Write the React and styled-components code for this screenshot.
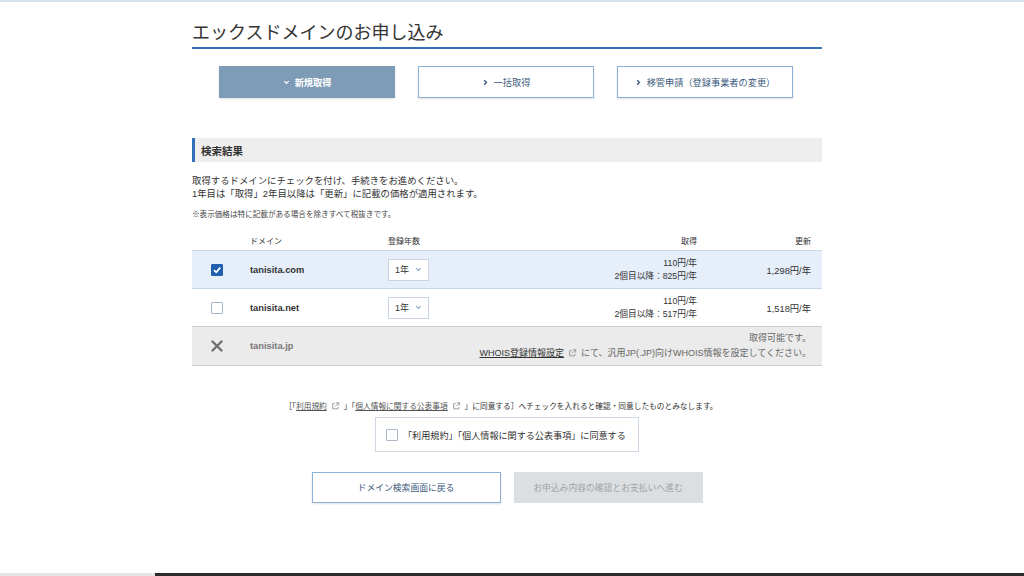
import React from "react";
import styled, { createGlobalStyle } from "styled-components";

const GlobalStyle = createGlobalStyle`
  html, body {
    margin: 0;
    padding: 0;
    background: #fff;
  }
  body {
    font-family: "Liberation Sans", "Noto Sans CJK JP", sans-serif;
    color: #333;
  }
`;

const Page = styled.div`
  min-height: 100vh;
  display: flex;
  flex-direction: column;
  border-top: 2px solid #d6e3f1;
  box-sizing: border-box;
`;

const Main = styled.div`
  width: 630px;
  margin-left: 192px;
`;

const Title = styled.h1`
  margin: 19px 0 0;
  padding-bottom: 2px;
  font-size: 18px;
  line-height: 24px;
  font-weight: normal;
  color: #333;
  border-bottom: 2px solid #3270b8;
`;

const Tabs = styled.div`
  display: flex;
  gap: 23px;
  margin-top: 17px;
  padding-left: 27px;
`;

const Tab = styled.div`
  width: 176px;
  height: 32px;
  box-sizing: border-box;
  display: flex;
  align-items: center;
  justify-content: center;
  gap: 5px;
  font-size: 9.2px;
  font-weight: ${(p) => (p.$active ? "bold" : "normal")};
  color: ${(p) => (p.$active ? "#fff" : "#3c5a7c")};
  background: ${(p) => (p.$active ? "#7f9cb7" : "#fff")};
  border: 1px solid ${(p) => (p.$active ? "#7f9cb7" : "#8db0d6")};
  box-shadow: 0 1px 2px rgba(0, 0, 0, 0.12);
`;

const SectionHead = styled.h2`
  margin: 40px 0 0;
  height: 24px;
  box-sizing: border-box;
  display: flex;
  align-items: center;
  padding-left: 6px;
  background: #eeeeee;
  border-left: 3px solid #3270b8;
  font-size: 10.5px;
  font-weight: bold;
  color: #333;
`;

const Lead = styled.p`
  margin: 12px 0 0;
  font-size: 9.4px;
  line-height: 13px;
  color: #333;
`;

const Note = styled.p`
  margin: 9px 0 0;
  font-size: 7.6px;
  line-height: 12px;
  color: #444;
`;

const Table = styled.div`
  margin-top: 10px;
`;

const Row = styled.div`
  display: grid;
  grid-template-columns: 58px 138px 100px 1fr 125px;
  align-items: center;
  height: ${(p) => (p.$head ? "20px" : p.$tall ? "39px" : "38px")};
  box-sizing: border-box;
  background: ${(p) => p.$bg || "transparent"};
  border-bottom: 1px solid ${(p) => p.$line || "#c8d6e6"};
`;

const HeadCell = styled.div`
  font-size: 8px;
  color: #333;
  text-align: ${(p) => (p.$right ? "right" : "left")};
  padding-right: ${(p) => (p.$last ? "11px" : "0")};
`;

const CheckCell = styled.div`
  padding-left: 19px;
  display: flex;
  align-items: center;
`;

const Box = styled.span`
  width: 12px;
  height: 12px;
  box-sizing: border-box;
  display: inline-flex;
  align-items: center;
  justify-content: center;
  border-radius: 1px;
  background: ${(p) => (p.$checked ? "#1f5fae" : "#fff")};
  border: 1px solid ${(p) => (p.$checked ? "#1f5fae" : "#a9b7c7")};
  flex: none;
`;

const Domain = styled.div`
  font-size: 9.3px;
  font-weight: bold;
  color: ${(p) => (p.$muted ? "#777" : "#333")};
`;

const Select = styled.div`
  width: 41px;
  height: 22px;
  box-sizing: border-box;
  border: 1px solid #c9d4e0;
  background: #fff;
  display: flex;
  align-items: center;
  gap: 6px;
  padding-left: 6px;
  font-size: 9px;
  color: #333;
`;

const Price = styled.div`
  text-align: right;
  font-size: 8.7px;
  line-height: 13px;
  color: #333;
`;

const Renew = styled.div`
  text-align: right;
  padding-right: 11px;
  font-size: 9.3px;
  color: #333;
`;

const Unavailable = styled.div`
  grid-column: 3 / 6;
  text-align: right;
  padding-right: 11px;
  font-size: 9px;
  line-height: 15px;
  color: #666;
`;

const DocLink = styled.span`
  color: ${(p) => (p.$dark ? "#333" : "#555")};
  text-decoration: underline;
`;

const Agree = styled.p`
  margin: 35px 0 0;
  padding-right: 12px;
  text-align: center;
  font-size: 7.7px;
  line-height: 12px;
  color: #333;
`;

const AgreeBox = styled.label`
  margin: 4px auto 0;
  width: 264px;
  height: 35px;
  box-sizing: border-box;
  display: flex;
  align-items: center;
  gap: 5px;
  padding-left: 10px;
  border: 1px solid #cfd8e2;
  font-size: 9.1px;
  color: #333;
`;

const Actions = styled.div`
  display: flex;
  justify-content: center;
  gap: 13px;
  margin-top: 20px;
`;

const Button = styled.div`
  width: 189px;
  height: 31px;
  box-sizing: border-box;
  display: flex;
  align-items: center;
  justify-content: center;
  font-size: 8.8px;
  color: ${(p) => (p.$disabled ? "#a0a3a6" : "#3c5a7c")};
  background: ${(p) => (p.$disabled ? "#dcdfe2" : "#fff")};
  border: 1px solid ${(p) => (p.$disabled ? "#dcdfe2" : "#8db0d6")};
  box-shadow: ${(p) => (p.$disabled ? "none" : "0 1px 2px rgba(0,0,0,0.12)")};
`;

const BottomBar = styled.div`
  margin-top: auto;
  height: 3px;
  display: grid;
  grid-template-columns: 155px 1fr;
`;

const BarPart = styled.div`
  background: ${(p) => p.$c};
`;

const Chevron = ({ down, color }) => (
  <svg width="7" height="7" viewBox="0 0 8 8">
    {down ? (
      <polyline points="1.5,2.5 4,5 6.5,2.5" fill="none" stroke={color} strokeWidth="1.4" />
    ) : (
      <polyline points="2.5,1.5 5,4 2.5,6.5" fill="none" stroke={color} strokeWidth="1.6" />
    )}
  </svg>
);

const Check = () => (
  <svg width="10" height="10" viewBox="0 0 10 10">
    <polyline points="2,5.2 4.2,7.3 8.2,2.6" fill="none" stroke="#fff" strokeWidth="1.8" />
  </svg>
);

const Cross = () => (
  <svg width="12" height="12" viewBox="0 0 12 12">
    <path d="M1.5 1.5 L10.5 10.5 M10.5 1.5 L1.5 10.5" stroke="#6f6f6f" strokeWidth="2.4" strokeLinecap="round" />
  </svg>
);

const Ext = () => (
  <svg width="9" height="8" viewBox="0 0 10 10" style={{ margin: "0 4px", verticalAlign: "-1px" }}>
    <path d="M4 2 H1.5 V8.5 H8 V6" fill="none" stroke="#888" strokeWidth="1" />
    <path d="M5.5 1 H9 V4.5 M9 1 L4.5 5.5" fill="none" stroke="#888" strokeWidth="1" />
  </svg>
);

const domains = [
  { name: "tanisita.com", checked: true, first: "110円/年", next: "2個目以降：825円/年", renew: "1,298円/年" },
  { name: "tanisita.net", checked: false, first: "110円/年", next: "2個目以降：517円/年", renew: "1,518円/年" },
];

export default function App() {
  return (
    <Page>
      <GlobalStyle />
      <Main>
        <Title>エックスドメインのお申し込み</Title>
        <Tabs>
          <Tab $active>
            <Chevron down color="#fff" />
            新規取得
          </Tab>
          <Tab>
            <Chevron color="#3c5a7c" />
            一括取得
          </Tab>
          <Tab>
            <Chevron color="#3c5a7c" />
            移管申請（登録事業者の変更）
          </Tab>
        </Tabs>

        <SectionHead>検索結果</SectionHead>
        <Lead>
          取得するドメインにチェックを付け、手続きをお進めください。
          <br />
          1年目は「取得」2年目以降は「更新」に記載の価格が適用されます。
        </Lead>
        <Note>※表示価格は特に記載がある場合を除きすべて税抜きです。</Note>

        <Table>
          <Row $head>
            <div />
            <HeadCell>ドメイン</HeadCell>
            <HeadCell>登録年数</HeadCell>
            <HeadCell $right>取得</HeadCell>
            <HeadCell $right $last>更新</HeadCell>
          </Row>
          {domains.map((d, i) => (
            <Row key={d.name} $bg={i === 0 ? "#e5eef9" : "#fff"} $line={i === 1 ? "#c9ced4" : "#c8d6e6"}>
              <CheckCell>
                <Box $checked={d.checked}>{d.checked && <Check />}</Box>
              </CheckCell>
              <Domain>{d.name}</Domain>
              <div>
                <Select>
                  1年
                  <Chevron down color="#8aa7c8" />
                </Select>
              </div>
              <Price>
                {d.first}
                <br />
                {d.next}
              </Price>
              <Renew>{d.renew}</Renew>
            </Row>
          ))}
          <Row $tall $bg="#ebebeb" $line="#cccccc">
            <CheckCell>
              <Cross />
            </CheckCell>
            <Domain $muted>tanisita.jp</Domain>
            <Unavailable>
              取得可能です。
              <br />
              <DocLink $dark>WHOIS登録情報設定</DocLink>
              <Ext />
              にて、汎用JP(.JP)向けWHOIS情報を設定してください。
            </Unavailable>
          </Row>
        </Table>

        <Agree>
          ［「<DocLink>利用規約</DocLink>
          <Ext />」「<DocLink>個人情報に関する公表事項</DocLink>
          <Ext />」に同意する］へチェックを入れると確認・同意したものとみなします。
        </Agree>
        <AgreeBox>
          <Box />
          「利用規約」「個人情報に関する公表事項」に同意する
        </AgreeBox>

        <Actions>
          <Button>ドメイン検索画面に戻る</Button>
          <Button $disabled>お申込み内容の確認とお支払いへ進む</Button>
        </Actions>
      </Main>
      <BottomBar>
        <BarPart $c="#e6e6e6" />
        <BarPart $c="#2b2b2b" />
      </BottomBar>
    </Page>
  );
}
